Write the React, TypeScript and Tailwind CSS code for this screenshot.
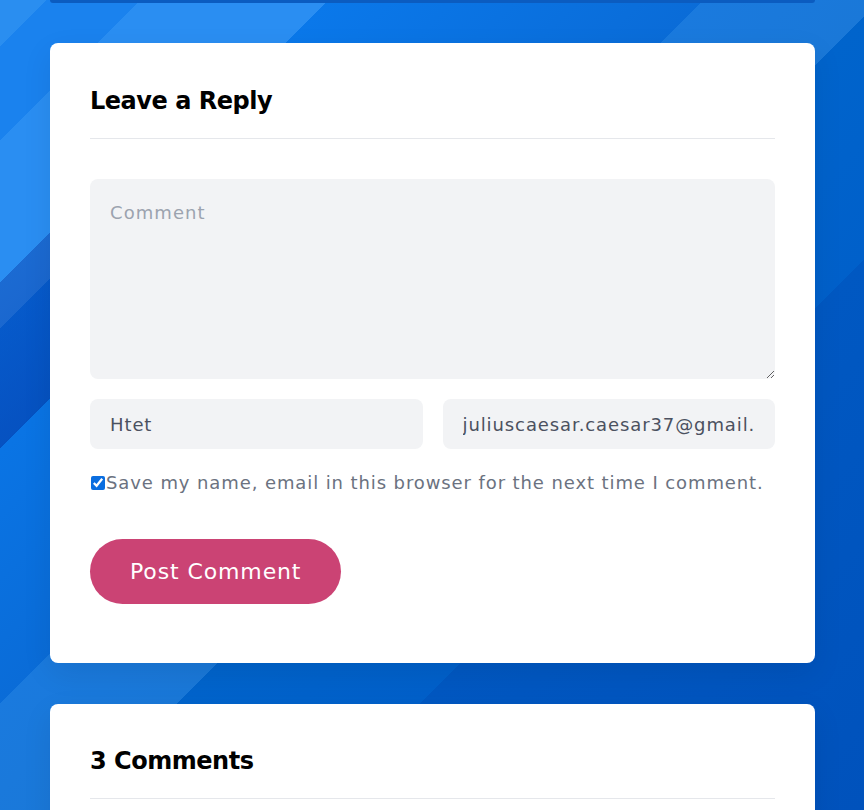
import React, { useState } from 'react';

const App: React.FC = () => {
  const [comment, setComment] = useState('');
  const [name, setName] = useState('Htet');
  const [email, setEmail] = useState('juliuscaesar.caesar37@gmail.com');
  const [remember, setRemember] = useState(true);

  return (
    <div
      className="h-[810px] w-full overflow-hidden bg-no-repeat bg-[length:50px_810px,100%_100%] bg-[linear-gradient(135deg,transparent_0%,transparent_32.9%,rgba(0,40,150,0.35)_32.9%,rgba(0,40,150,0.45)_52.1%,transparent_52.1%),linear-gradient(135deg,#2a8ef0_0%,#2a8ef0_2.8%,#1a82ee_2.8%,#1a82ee_8.4%,#2a8ef2_8.4%,#2a8ef2_19.6%,#0a78ea_19.6%,#0a6cd8_42%,#1a7ade_42%,#1a78d8_52.6%,#0064cc_52.6%,#0060ca_67.1%,#0058c2_67.1%,#0052bc_100%)]"
      style={{ fontFamily: '"DejaVu Sans", "Noto Sans", sans-serif' }}
    >
      <div className="mx-[50px] w-[765px]">
        {/* bottom edge of previous card */}
        <div className="h-[3px] bg-[#0b5cc0] rounded-b-md" />

        {/* Leave a Reply */}
        <section className="mt-[40px] bg-white rounded-lg px-10 pt-[42px] pb-[59px] shadow-[0_10px_30px_rgba(0,0,0,0.08)]">
          <h3 className="text-2xl leading-8 font-bold text-black tracking-[-0.02em] pb-[21px] border-b border-[#e5e7eb]">
            Leave a Reply
          </h3>

          <form onSubmit={(e) => e.preventDefault()} className="mt-10">
            <textarea
              value={comment}
              onChange={(e) => setComment(e.target.value)}
              placeholder="Comment"
              className="block w-full h-[200px] bg-[#f2f3f5] rounded-lg px-5 py-5 text-lg leading-7 tracking-[0.06em] text-[#4b5160] placeholder:text-[#9ca3af] outline-none"
            />

            <div className="grid grid-cols-2 gap-5 mt-5">
              <input
                type="text"
                value={name}
                onChange={(e) => setName(e.target.value)}
                className="h-[50px] bg-[#f2f3f5] rounded-lg px-5 text-lg tracking-[0.05em] text-[#4b5160] outline-none"
              />
              <input
                type="email"
                value={email}
                onChange={(e) => setEmail(e.target.value)}
                className="h-[50px] bg-[#f2f3f5] rounded-lg px-5 text-lg tracking-[0.05em] text-[#4b5160] outline-none"
              />
            </div>

            <label className="flex items-center mt-5 text-lg leading-7 tracking-[0.05em] text-[#6b7280]">
              <input
                type="checkbox"
                checked={remember}
                onChange={(e) => setRemember(e.target.checked)}
                className="w-[14px] h-[14px] m-0 ml-px mr-px accent-[#0b6ee0]"
              />
              Save my name, email in this browser for the next time I comment.
            </label>

            <button
              type="submit"
              className="mt-[42px] h-[65px] px-10 rounded-full bg-[#cb4374] text-white text-[22px] tracking-[0.04em]"
            >
              Post Comment
            </button>
          </form>
        </section>

        {/* Comments */}
        <section className="mt-[41px] bg-white rounded-lg px-10 pt-[41px] pb-10 shadow-[0_10px_30px_rgba(0,0,0,0.08)]">
          <h3 className="text-2xl leading-8 font-bold text-black tracking-[-0.02em] pb-[21px] border-b border-[#e5e7eb]">
            3 Comments
          </h3>
          <div className="h-[200px]" />
        </section>
      </div>
    </div>
  );
};

export default App;
